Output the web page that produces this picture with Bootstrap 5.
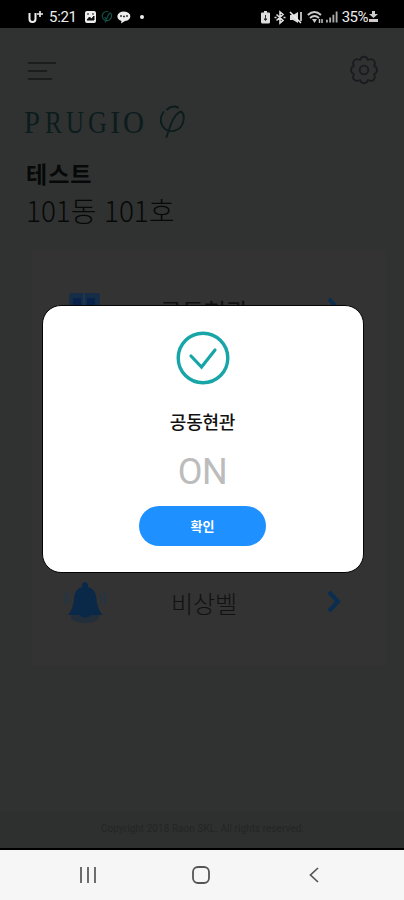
<!DOCTYPE html>
<html lang="ko">
<head>
<meta charset="utf-8">
<meta name="viewport" content="width=device-width, initial-scale=1">
<title>PRUGIO</title>
<link href="https://cdn.jsdelivr.net/npm/bootstrap@5.3.0/dist/css/bootstrap.min.css" rel="stylesheet">
<style>
body{font-family:"Noto Sans CJK KR",sans-serif;background:#303231;height:900px;overflow:hidden}
svg{display:block;flex:none;overflow:visible}
.statusbar{height:28px;background:#000;color:#eee;font:15px/28px Roboto,sans-serif;padding:6px 26px 0 28px}
.statusbar span{line-height:22px}
.screen{height:820px;padding-top:22px}
.topline{padding:0 26px 0 28px;height:40px}
.brand{margin:13px 0 0 24px}
.who{padding-left:26px;color:#070808}
.who-name{font-size:23px;line-height:28px;font-weight:700;margin-top:20px;letter-spacing:1px}
.who-home{font-size:28px;line-height:36px;font-weight:300;margin-top:5px;letter-spacing:-.1px}
.menu{margin:22px 18px 0 32px;height:416px;background:#323332;padding:36px 43px 0 32px}
.menu-row{height:50px}
.menu-row + .menu-row{margin-top:242px}
.menu-label{font-size:24px;line-height:34px;font-weight:300;color:#111;width:220px;padding-right:25px;text-align:center}
.copy{margin-top:auto;height:37px;background:#2e302f;color:#232524;font:10px/36px Roboto,sans-serif;padding-left:101px;letter-spacing:.05px}
.navkeys{height:52px;background:#f6f6f6;border-top:2px solid #000;padding:0 85px 0 79px}
.navkeys svg:nth-child(2){margin-right:4px}
.popup{left:42px;top:305px;width:322px;height:268px;border-radius:19px;background:#fff;border:1px solid #050505;padding:25px 1px 0 0}
.popup-title{font-size:18px;line-height:26px;font-weight:500;color:#111;margin-top:23px;letter-spacing:-.2px}
.popup-state{font:400 36px/42px Roboto,sans-serif;color:#bcbcbc;margin-top:17px;letter-spacing:-.5px}
.btn-ok{width:127px;height:40px;background:#1e90ff;color:#fff;font-size:13px;font-weight:700;line-height:20px;margin-top:13px;border:0}
</style>
<script src="https://cdn.jsdelivr.net/npm/bootstrap@5.3.0/dist/js/bootstrap.bundle.min.js"></script>
</head>
<body class="d-flex flex-column position-relative m-0">
<header class="statusbar d-flex justify-content-between align-items-center flex-shrink-0">
  <div class="d-flex align-items-center">
    <svg width="17" height="16" viewBox="0 0 17 16" fill="none" stroke="#eee"><path d="M1.500 4v6q0 3 3 3t3-3V4" stroke-width="2"/><path d="M9 5h6M12 2v6" stroke-width="1.600"/></svg>
    <span style="margin-left:4px;letter-spacing:-.3px">5:21</span>
    <svg class="ms-2" width="12" height="12" viewBox="0 0 12 12"><rect width="11" height="12" rx="2" fill="#eee"/><path d="M2 3h2M7 3h2M2 9l2.500-3 2 2L9 5v4z" fill="#111" stroke="#111"/></svg>
    <svg style="margin-left:4px" width="12" height="14" viewBox="0 0 13 14" fill="none" stroke="#145047" stroke-width="1.300"><path d="M8 1.300C3 0 1 4 1.500 7s4 5 7 3.500 4-6 2-7.500S6 9 4.500 13M4 7l2 3"/></svg>
    <svg style="margin-left:4px" width="14" height="13" viewBox="0 0 14 13"><path d="M7 .5c8 0 8.500 9 1 9.500L4 12.500 4.500 10C-2 8-.5.500 7 .500z" fill="#eee"/><path d="M3 5h2M6 5.500h2M9 5h2" stroke="#333" stroke-width="1.500"/></svg>
    <svg width="4" height="4" viewBox="0 0 4 4" style="margin-left:9px"><circle cx="2" cy="2" r="2" fill="#eee"/></svg>
  </div>
  <div class="d-flex align-items-center">
    <svg width="9" height="13" viewBox="0 0 9 13"><path d="M3 0h3v1.500h2q1 0 1 1V11q0 1.500-1.500 1.500h-6Q0 12.500 0 11V2.500q0-1 1-1h2z" fill="#ddd"/><path d="M4.500 4v4M3 8h3L4.500 9.500z" stroke="#333" fill="#333"/></svg>
    <svg width="12" height="13" viewBox="0 0 12 13" fill="none" stroke="#ddd" stroke-width="1.600" style="margin-left:4px"><path d="M2.500 3.500l6.500 6-3 2.500V1l3 2.500-6.500 6M.5 6.500h2M9.500 6.500h2"/></svg>
    <svg width="13" height="13" viewBox="0 0 13 13" style="margin-left:4px"><path d="M0 4h3l5-3v11L3 9H0z" fill="#ddd"/><path d="M0 1l11 11M11 1v9" stroke="#eee" stroke-width="1.500"/></svg>
    <svg width="17" height="13" viewBox="0 0 17 13" fill="none" stroke="#ccc" stroke-width="1.900" style="margin-left:4px"><path d="M.8 4Q7.500-2 14 4M3 7q4.500-4 9 0"/><path d="M5 8h5L7.500 12z" fill="#ccc" stroke="none"/><path d="M12.500 8v4M15 8v4" stroke-width="1.400"/></svg>
    <svg width="12" height="12" viewBox="0 0 13 12" style="margin-left:2px"><path d="M0 9h2v3H0zM3.500 6.500h2V12h-2zM7 3.500h2V12H7zM10.500 0h2v12h-2z" fill="#aaa"/></svg>
    <span style="margin-left:4px;font-size:15px;letter-spacing:-.5px">35%</span>
    <svg width="9" height="12" viewBox="0 0 9 12" style="margin-left:1px"><path d="M3 0h3v3h3L4.500 7 0 3h3zM0 8h9v3H0z" fill="#ccc"/></svg>
  </div>
</header>

<main class="screen d-flex flex-column flex-shrink-0">
  <div class="topline d-flex justify-content-between align-items-center">
    <svg width="28" height="20" viewBox="0 0 28 20" stroke="#1b1d1d" stroke-width="1.800"><path d="M0 3h28M0 11h19M0 19h24"/></svg>
    <svg width="28" height="28" viewBox="0 0 28 28" fill="none" stroke="#191c1f" stroke-width="1.800" stroke-linejoin="round"><path d="M11 2Q14-.5 17 2l1 2 3-1q4 1 4 5l-1 2 2 1q2 3 0 6l-2 1 1 3q-1 4-4 4l-3-1-1 2q-3 2.500-6 0l-1-2-3 1q-4-1-4-4l1-3-2-1q-2-3 0-6l2-1-1-2q0-4 4-5l3 1z"/><circle cx="14" cy="14" r="4.300"/></svg>
  </div>
  <svg class="brand" width="164" height="36" viewBox="0 0 164 36">
    <g font-family="Liberation Serif,serif" font-size="31" fill="#0c1c1d"><text x="0" y="30" textLength="16" lengthAdjust="spacingAndGlyphs">P</text><text x="21" y="30" textLength="17" lengthAdjust="spacingAndGlyphs">R</text><text x="42" y="30" textLength="18" lengthAdjust="spacingAndGlyphs">U</text><text x="64" y="30" textLength="19" lengthAdjust="spacingAndGlyphs">G</text><text x="86" y="30">I</text><text x="99" y="30" textLength="21" lengthAdjust="spacingAndGlyphs">O</text></g>
    <g fill="none" stroke="#0c1c1d" stroke-linecap="round"><path d="M143 6.500q5-4.500 11-2" stroke-width="2"/><path d="M139.500 9q-5 7-1 14 4 6 11 5 9-2 10-11 1-7-3-8.500Q151 11 147 21L142.500 34" stroke-width="1.900"/></g>
  </svg>
  <div class="who"><div class="who-name">테스트</div><div class="who-home">101동 101호</div></div>
  <section class="menu">
    <div class="menu-row d-flex align-items-center justify-content-between">
      <svg width="42" height="40" viewBox="0 0 42 40"><rect x="5" y="2" width="31" height="34" rx="3" fill="#152d47"/><path d="M9 7h8v25H9zM23 7h8v25h-8z" fill="#08224a"/><path d="M20 2v34" stroke="#28405a"/></svg>
      <span class="menu-label fw-normal">공동현관</span>
      <svg width="16" height="24" viewBox="0 0 16 24" fill="none" stroke="#0a2e52" stroke-width="4"><path d="M2 0l9 10-9 10"/></svg>
    </div>
    <div class="menu-row d-flex align-items-center justify-content-between">
      <svg width="42" height="44" viewBox="0 0 42 44"><ellipse cx="21" cy="36" rx="14" ry="6" fill="#182c40" opacity=".6"/><path d="M18 3q3-4 6 0v3q8 2 8.500 12 .5 9 6 16H4Q9.500 27 10 18q.5-10 8-12z" fill="#0a2949"/><path d="M15 34q6 5 12 0z" fill="#0a2949"/><path d="M6 13q-3 5 0 9M2.500 11q-3.500 7 0 13M36 13q3 5 0 9M39.500 11q3.500 7 0 13" fill="none" stroke="#20364b" stroke-width="1.300"/></svg>
      <span class="menu-label">비상벨</span>
      <svg width="16" height="24" viewBox="0 0 16 24" fill="none" stroke="#0a2e52" stroke-width="4"><path d="M2 1l9 9.500L2 20"/></svg>
    </div>
  </section>
  <footer class="copy">Copyright 2018 Raon SKL. All rights reserved.</footer>
</main>

<nav class="navkeys d-flex align-items-center justify-content-between flex-shrink-0">
  <svg width="18" height="16" viewBox="0 0 18 16" stroke="#555" stroke-width="1.700"><path d="M2 0v16M9 0v16M16 0v16"/></svg>
  <svg width="18" height="18" viewBox="0 0 18 18" fill="none" stroke="#555" stroke-width="1.800"><rect x="1" y="1" width="16" height="16" rx="5"/></svg>
  <svg width="10" height="16" viewBox="0 0 10 16" fill="none" stroke="#555" stroke-width="1.700"><path d="M9 1L1.500 8 9 15"/></svg>
</nav>

<div class="popup position-absolute d-flex flex-column align-items-center" role="dialog">
  <svg width="54" height="54" viewBox="0 0 54 54" fill="none" stroke="#18a5a7"><circle cx="27" cy="27" r="24.800" stroke-width="3.400"/><path d="M15 25l10.500 11L39 19" stroke-width="3.200" stroke-linecap="round"/></svg>
  <div class="popup-title">공동현관</div>
  <div class="popup-state">ON</div>
  <button class="btn btn-ok rounded-pill" type="button">확인</button>
</div>
</body>
</html>
